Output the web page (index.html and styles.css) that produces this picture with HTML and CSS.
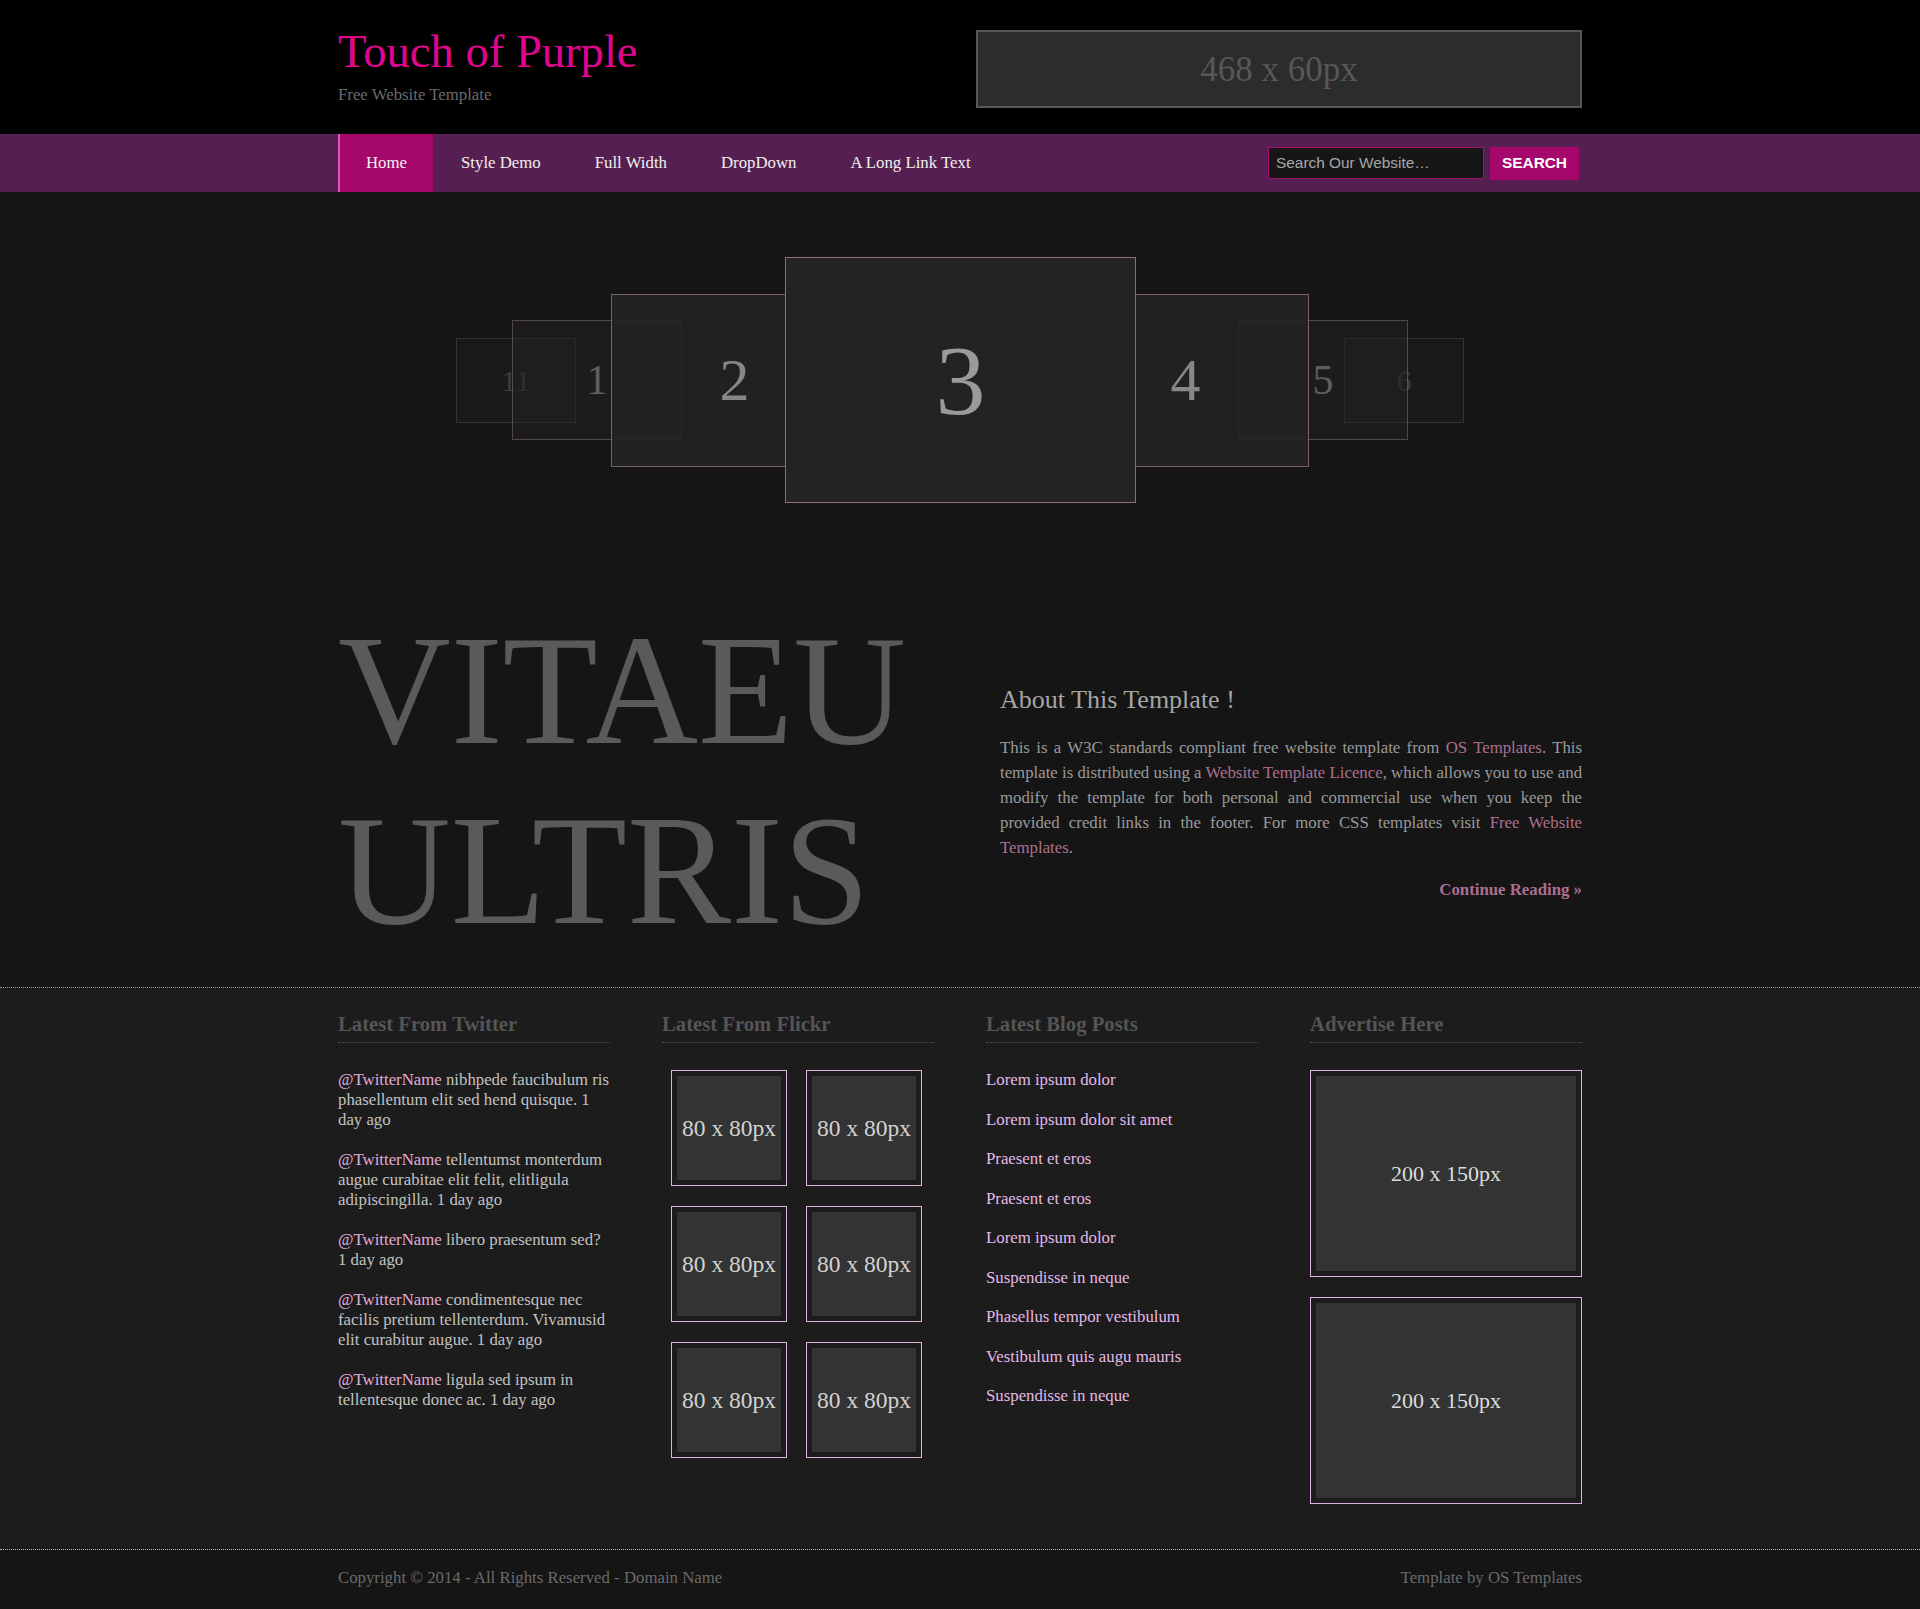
FILE: index.html
```html
<!DOCTYPE html>
<html lang="en">
<head>
<meta charset="utf-8">
<title>Touch of Purple</title>
<link rel="stylesheet" href="styles.css">
</head>
<body>
<header class="site-header">
  <div class="wrap header-inner">
    <div class="brand">
      <h1 class="logo">Touch of Purple</h1>
      <p class="tagline">Free Website Template</p>
    </div>
    <div class="banner-ad">468 x 60px</div>
  </div>
</header>

<nav class="topnav">
  <div class="wrap nav-inner">
    <ul class="menu">
      <li class="active"><a href="#">Home</a></li>
      <li><a href="#">Style Demo</a></li>
      <li><a href="#">Full Width</a></li>
      <li><a href="#">DropDown</a></li>
      <li><a href="#">A Long Link Text</a></li>
    </ul>
    <form class="search" action="#">
      <input type="text" placeholder="Search Our Website…">
      <button type="button">SEARCH</button>
    </form>
  </div>
</nav>

<section class="showcase">
  <div class="slider">
    <div class="slide s-far s11"><span>11</span></div>
    <div class="slide s-mid s1"><span>1</span></div>
    <div class="slide s-near s2"><span>2</span></div>
    <div class="slide s-main s3"><span>3</span></div>
    <div class="slide s-near s4"><span>4</span></div>
    <div class="slide s-mid s5"><span>5</span></div>
    <div class="slide s-far s6"><span>6</span></div>
  </div>

  <div class="wrap intro">
    <div class="big-title">VITAEU<br>ULTRIS</div>
    <div class="about">
      <h2>About This Template !</h2>
      <p>This is a W3C standards compliant free website template from <a href="#">OS Templates</a>. This template is distributed using a <a href="#">Website Template Licence</a>, which allows you to use and modify the template for both personal and commercial use when you keep the provided credit links in the footer. For more CSS templates visit <a href="#">Free Website Templates</a>.</p>
      <p class="more"><a href="#">Continue Reading »</a></p>
    </div>
  </div>
</section>

<section class="widgets">
  <div class="wrap widget-grid">
    <div class="widget">
      <h3>Latest From Twitter</h3>
      <ul class="tweets">
        <li><a href="#">@TwitterName</a> nibhpede faucibulum ris phasellentum elit sed hend quisque. 1 day ago</li>
        <li><a href="#">@TwitterName</a> tellentumst monterdum augue curabitae elit felit, elitligula adipiscingilla. 1 day ago</li>
        <li><a href="#">@TwitterName</a> libero praesentum sed? 1 day ago</li>
        <li><a href="#">@TwitterName</a> condimentesque nec facilis pretium tellenterdum. Vivamusid elit curabitur augue. 1 day ago</li>
        <li><a href="#">@TwitterName</a> ligula sed ipsum in tellentesque donec ac. 1 day ago</li>
      </ul>
    </div>
    <div class="widget">
      <h3>Latest From Flickr</h3>
      <div class="flickr">
        <div class="thumb"><div class="ph">80 x 80px</div></div>
        <div class="thumb"><div class="ph">80 x 80px</div></div>
        <div class="thumb"><div class="ph">80 x 80px</div></div>
        <div class="thumb"><div class="ph">80 x 80px</div></div>
        <div class="thumb"><div class="ph">80 x 80px</div></div>
        <div class="thumb"><div class="ph">80 x 80px</div></div>
      </div>
    </div>
    <div class="widget">
      <h3>Latest Blog Posts</h3>
      <ul class="posts">
        <li><a href="#">Lorem ipsum dolor</a></li>
        <li><a href="#">Lorem ipsum dolor sit amet</a></li>
        <li><a href="#">Praesent et eros</a></li>
        <li><a href="#">Praesent et eros</a></li>
        <li><a href="#">Lorem ipsum dolor</a></li>
        <li><a href="#">Suspendisse in neque</a></li>
        <li><a href="#">Phasellus tempor vestibulum</a></li>
        <li><a href="#">Vestibulum quis augu mauris</a></li>
        <li><a href="#">Suspendisse in neque</a></li>
      </ul>
    </div>
    <div class="widget">
      <h3>Advertise Here</h3>
      <div class="ads">
        <div class="ad"><div class="ph">200 x 150px</div></div>
        <div class="ad"><div class="ph">200 x 150px</div></div>
      </div>
    </div>
  </div>
</section>

<footer class="site-footer">
  <div class="wrap footer-inner">
    <p>Copyright © 2014 - All Rights Reserved - <a href="#">Domain Name</a></p>
    <p>Template by <a href="#">OS Templates</a></p>
  </div>
</footer>
</body>
</html>
```

FILE: styles.css
```css
* { box-sizing: border-box; }

html, body {
  margin: 0;
  padding: 0;
}

body {
  background: #151515;
  font-family: "Liberation Serif", "Times New Roman", serif;
  font-size: 16.8px;
  color: #bdbdbd;
}

a { text-decoration: none; color: inherit; }

.wrap {
  width: 1244px;
  margin: 0 auto;
}

/* ---------- header ---------- */
.site-header {
  background: #000;
  height: 134px;
}

.header-inner {
  display: flex;
  justify-content: space-between;
  align-items: flex-start;
}

.brand { padding-top: 24px; }

.logo {
  margin: 0;
  font-size: 46.6px;
  line-height: 54px;
  font-weight: normal;
  color: #e0058e;
}

.tagline {
  margin: 7px 0 0;
  font-size: 16.8px;
  line-height: 19px;
  color: #6b6b6b;
}

.banner-ad {
  margin-top: 30px;
  width: 606px;
  height: 78px;
  border: 2px solid #575757;
  background: #2c2c2c;
  color: #575757;
  font-size: 35px;
  display: flex;
  align-items: center;
  justify-content: center;
  padding-top: 2px;
}

/* ---------- nav ---------- */
.topnav {
  background: #561f51;
  height: 58px;
}

.nav-inner {
  display: flex;
  justify-content: space-between;
  align-items: center;
  height: 58px;
}

.menu {
  list-style: none;
  margin: 0;
  padding: 0;
  display: flex;
}

.menu a {
  display: block;
  padding: 0 26px;
  line-height: 58px;
  border-left: 2px solid transparent;
  color: #f0f0f0;
  font-size: 16.8px;
}

.menu .active a {
  background: #a5076a;
  border-left-color: #e451c1;
}

.search {
  display: flex;
  align-items: center;
  gap: 6px;
  margin: 0 3px 0 0;
}

.search input {
  width: 216px;
  height: 32px;
  border: 1px solid #a3106c;
  background: #161616;
  color: #aaa;
  padding: 0 7px;
  font-family: "Liberation Sans", Arial, sans-serif;
  font-size: 15.4px;
  outline: none;
}

.search input::placeholder { color: #a8a8a8; }

.search button {
  width: 89px;
  height: 33px;
  border: 0;
  background: #a5076a;
  color: #fff;
  font-family: "Liberation Sans", Arial, sans-serif;
  font-weight: bold;
  font-size: 15.4px;
  padding: 0;
}

/* ---------- showcase / slider ---------- */
.showcase { background: #151515; }

.slider {
  position: relative;
  width: 1008px;
  height: 376px;
  margin: 0 auto;
}

.slide {
  position: absolute;
  border: 1px solid #8a6d87;
  background: #232323;
  color: #9a9a9a;
  display: flex;
  align-items: center;
  justify-content: center;
}

.s-main { z-index: 4; left: 329px; top: 65px; width: 351px; height: 246px; font-size: 100px; }
.s-near { z-index: 3; top: 102px; width: 247px; height: 173px; font-size: 60px; opacity: 0.86; }
.s-mid  { z-index: 2; top: 128px; width: 170px; height: 120px; font-size: 42px; opacity: 0.55; }
.s-far  { z-index: 1; top: 146px; width: 120px; height: 85px; font-size: 30px; opacity: 0.3; }

.s11 { left: 0; }
.s1  { left: 56px; }
.s2  { left: 155px; }
.s4  { left: 606px; }
.s5  { left: 782px; }
.s6  { left: 888px; }

/* ---------- intro ---------- */
.intro {
  display: grid;
  grid-template-columns: 1fr 582px;
  column-gap: 80px;
  padding: 33px 0 26px;
}

.big-title {
  font-size: 156px;
  line-height: 180px;
  color: #5a5a5a;
  white-space: nowrap;
}

.about { margin-top: 84px; }

.about h2 {
  margin: 0 0 20px;
  font-size: 26px;
  line-height: 30px;
  font-weight: normal;
  color: #a5a5a5;
}

.about p {
  margin: 0 0 17px;
  line-height: 25px;
  color: #9a9a9a;
  text-align: justify;
}

.about p a { color: #ad6f8f; }

.about .more {
  text-align: right;
  font-weight: bold;
  margin: 0;
}

/* ---------- widgets ---------- */
.widgets {
  background: #1c1c1c;
  border-top: 1px dotted #a48ea1;
  border-bottom: 1px dotted #b5b5b5;
  padding: 24px 0 45px;
}

.widget-grid {
  display: grid;
  grid-template-columns: repeat(4, 272px);
  column-gap: 52px;
  align-items: start;
}

.widget h3 {
  margin: 0 0 27px;
  padding-bottom: 6px;
  border-bottom: 1px dotted #575757;
  font-size: 20.7px;
  line-height: 24px;
  font-weight: bold;
  color: #555;
}

.tweets, .posts {
  list-style: none;
  margin: 0;
  padding: 0;
}

.tweets li {
  line-height: 20px;
  margin-bottom: 20px;
  color: #c2c2c2;
}

.tweets a { color: #e2aad9; }

.posts li {
  line-height: 20px;
  margin-bottom: 19.5px;
}

.posts a { color: #e4b9e8; }

.flickr {
  display: grid;
  grid-template-columns: 116px 116px;
  column-gap: 19px;
  row-gap: 20px;
  padding-left: 9px;
}

.thumb, .ad {
  border: 1px solid #dcb4dc;
  padding: 5px;
  background: #1c1c1c;
}

.ph {
  background: #333;
  color: #d2d2d2;
  display: flex;
  align-items: center;
  justify-content: center;
}

.thumb .ph {
  width: 104px;
  height: 104px;
  font-size: 23.5px;
}

.ads {
  display: flex;
  flex-direction: column;
  gap: 20px;
}

.ad .ph {
  width: 260px;
  height: 195px;
  font-size: 22px;
  color: #ddd;
}

/* ---------- footer ---------- */
.site-footer {
  background: #151515;
  height: 59px;
}

.footer-inner {
  display: flex;
  justify-content: space-between;
  padding-top: 18px;
}

.footer-inner p {
  margin: 0;
  line-height: 20px;
  color: #6a6a6a;
}
```
